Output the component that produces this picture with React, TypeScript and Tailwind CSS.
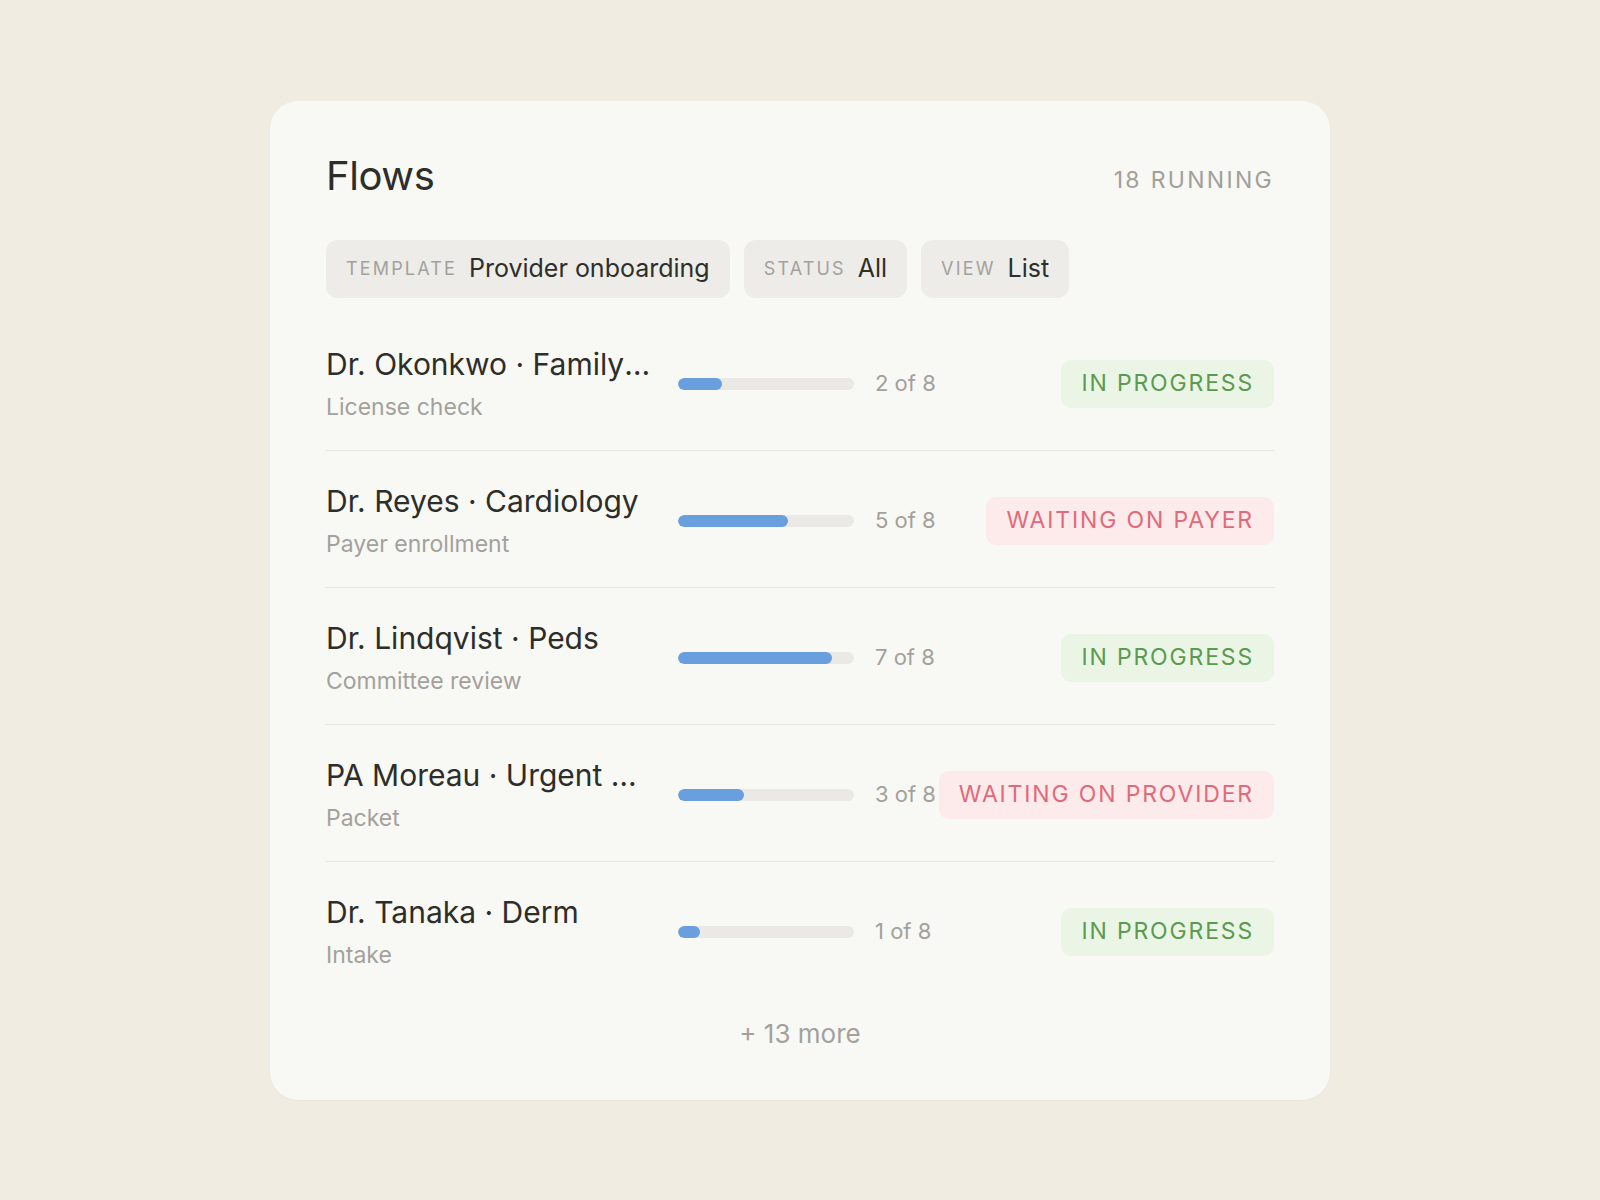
const FLOWS = [
  { name: 'Dr. Okonkwo · Family Medicine', step: 'License check', done: 2, status: 'ok' },
  { name: 'Dr. Reyes · Cardiology', step: 'Payer enrollment', done: 5, status: 'payer' },
  { name: 'Dr. Lindqvist · Peds', step: 'Committee review', done: 7, status: 'ok' },
  { name: 'PA Moreau · Urgent Care', step: 'Packet', done: 3, status: 'provider' },
  { name: 'Dr. Tanaka · Derm', step: 'Intake', done: 1, status: 'ok' },
] as const

const TOTAL = 8

const FILTERS = [
  { label: 'Template', value: 'Provider onboarding' },
  { label: 'Status', value: 'All' },
  { label: 'View', value: 'List' },
]

function StatusBadge({ status }: { status: string }) {
  if (status === 'ok') {
    return (
      <span className="flex h-12 items-center rounded-[10px] bg-[#eaf5e5] px-5 text-[23px] uppercase tracking-[0.08em] text-[#5c9a52]">
        In progress
      </span>
    )
  }
  return (
    <span className="flex h-12 items-center rounded-[10px] bg-[#fdeaea] px-5 text-[23px] uppercase tracking-[0.08em] text-[#e06a7b]">
      {status === 'payer' ? 'Waiting on payer' : 'Waiting on provider'}
    </span>
  )
}

export default function App() {
  return (
    <div className="flex min-h-screen items-center justify-center bg-[#f1ece1] font-['Inter',sans-serif]">
      <div className="w-[1060px] rounded-[28px] bg-[#f8f8f4] px-14 pb-[50px] pt-[51px] shadow-[0_1px_2px_rgba(0,0,0,0.03)]">
        {/* Header */}
        <div className="flex items-baseline justify-between">
          <h1 className="text-[40px] leading-[48px] tracking-[-0.01em] text-[#2d2d2a]">Flows</h1>
          <span className="relative -top-0.5 text-[23px] uppercase tracking-[0.1em] text-[#a19f9a]">18 running</span>
        </div>

        {/* Filters */}
        <div className="mt-10 flex gap-3.5">
          {FILTERS.map((f) => (
            <div
              key={f.label}
              className="flex h-[58px] items-center gap-3 rounded-[12px] bg-[#edece8] px-5"
            >
              <span className="text-[18px] uppercase tracking-[0.12em] text-[#a3a19c]">{f.label}</span>
              <span className="text-[25px] text-[#2e2e2b]">{f.value}</span>
            </div>
          ))}
        </div>

        {/* Rows */}
        <div className="mt-4">
          {FLOWS.map((row, i) => (
            <div
              key={row.name}
              className={`flex items-center pb-7 pt-8 ${i < FLOWS.length - 1 ? 'border-b border-[#e7e5e0]' : ''}`}
            >
              <div className="w-[330px] shrink-0">
                <div className="truncate text-[30px] leading-9 text-[#2d2d2a]">{row.name}</div>
                <div className="mt-2.5 text-[23px] leading-[30px] text-[#a3a19c]">{row.step}</div>
              </div>
              <div className="ml-[22px] h-3 w-[176px] shrink-0 overflow-hidden rounded-full bg-[#eae9e5]">
                <div
                  className="h-full rounded-full bg-[#6a9fdf]"
                  style={{ width: `${(row.done / TOTAL) * 100}%` }}
                />
              </div>
              <span className="ml-[21px] w-[62px] shrink-0 whitespace-nowrap text-[22px] text-[#a3a19c]">
                {row.done} of {TOTAL}
              </span>
              <div className="ml-auto">
                <StatusBadge status={row.status} />
              </div>
            </div>
          ))}
        </div>

        <div className="mt-[20px] text-center text-[26px] leading-8 text-[#a3a19c]">+ 13 more</div>
      </div>
    </div>
  )
}
